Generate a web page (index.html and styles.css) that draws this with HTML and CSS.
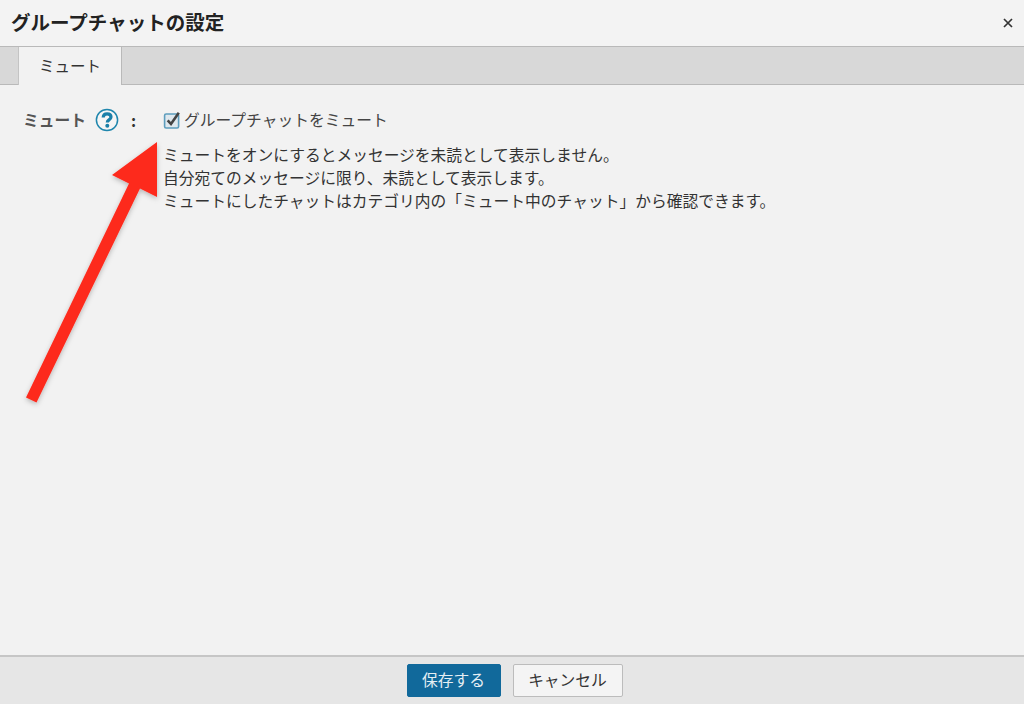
FILE: index.html
```html
<!DOCTYPE html>
<html lang="ja">
<head>
<meta charset="utf-8">
<title>グループチャットの設定</title>
<link rel="stylesheet" href="styles.css">
</head>
<body>
<div class="dialog">
  <header class="head">
    <h1 class="title">グループチャットの設定</h1>
    <svg class="close" width="10" height="10" viewBox="0 0 10 10"><path d="M1 1L9 9M9 1L1 9" stroke="#333" stroke-width="1.7" fill="none"/></svg>
  </header>
  <nav class="tabs"><div class="tab">ミュート</div></nav>
  <main class="body">
    <div class="label-col">
      <span class="label">ミュート</span>
      <svg class="help" width="24" height="24" viewBox="0 0 24 24"><circle cx="12" cy="12" r="10.6" fill="#fff" fill-opacity=".25" stroke="#1f86ad" stroke-width="1.5"/><path d="M8.200 9.500C8.300 7 10 5.800 12.100 5.800C14.400 5.800 16 7.100 16 9C16 10.400 15.200 11.100 14 11.900C12.800 12.700 12.300 13.200 12.300 14.600" fill="none" stroke="#1a7fa8" stroke-width="3.200"/><circle cx="12.300" cy="17.800" r="2" fill="#1a7fa8"/></svg>
      <span class="colon">:</span>
    </div>
    <div class="content">
      <div class="check-row">
        <svg class="check" width="18" height="18" viewBox="0 0 18 18"><rect x="1.600" y="3" width="14" height="14" rx="1.500" fill="#dfe8ee" stroke="#5d9dbd" stroke-width="1.600"/><path d="M4.700 9.300L8 13L15.800 1.800" fill="none" stroke="#444" stroke-width="2.600"/></svg>
        <span>グループチャットをミュート</span>
      </div>
      <p class="desc">ミュートをオンにするとメッセージを未読として表示しません。<br>自分宛てのメッセージに限り、未読として表示します。<br>ミュートにしたチャットはカテゴリ内の「ミュート中のチャット」から確認できます。</p>
    </div>
  </main>
  <footer class="foot">
    <button class="btn primary">保存する</button>
    <button class="btn">キャンセル</button>
  </footer>
  <svg class="arrow" width="180" height="420" viewBox="0 0 180 420">
    <defs><filter id="sh" x="-20%" y="-20%" width="140%" height="140%"><feDropShadow dx="0" dy="2" stdDeviation="2.500" flood-color="#000" flood-opacity=".25"/></filter></defs>
    <path d="M157 142L112 175L129 183.500L26 397.500L36.500 402.500L140 188.500L157 197Z" fill="#fd2a1c" filter="url(#sh)"/>
  </svg>
</div>
</body>
</html>
```
FILE: styles.css
```css
* { box-sizing: border-box; }
html, body { margin: 0; height: 100%; }
body { font-family: "Noto Sans CJK JP", "Liberation Sans", sans-serif; color: #333; background: #f2f2f2; }
.dialog { position: relative; width: 1024px; height: 704px; display: flex; flex-direction: column; overflow: hidden; }
.head { height: 47px; flex: none; display: flex; align-items: center; justify-content: space-between; padding: 0 11px 2px 11px; background: #f3f3f3; border-bottom: 1px solid #b9b9b9; }
.title { margin: 0; font-size: 19.500px; font-weight: 700; color: #222; line-height: 24px; }
.close { display: block; margin-top: 2px; }
.tabs { height: 38px; flex: none; display: flex; padding-left: 18px; background: #d8d8d8; border-bottom: 1px solid #b9b9b9; }
.tab { width: 104px; height: 38px; background: #f2f2f2; border-left: 1px solid #c4c4c4; border-right: 1px solid #b9b9b9; font-size: 15.500px; line-height: 36px; text-align: center; color: #333; }
.body { flex: 1; display: flex; padding-top: 24px; padding-left: 23px; }
.label-col { width: 140px; flex: none; height: 24px; display: flex; align-items: center; font-size: 15.750px; color: #555; }
.label { font-weight: 700; width: 72px; line-height: 20px; margin-top: -2px; }
.help { display: block; margin-top: -2px; }
.colon { margin-left: 12px; font-weight: 700; color: #333; margin-top: -2px; }
.content { font-size: 15.750px; }
.check-row { display: flex; align-items: center; height: 24px; line-height: 20px; color: #444; }
.check-row span { margin-top: -2px; }
.check { display: block; margin-right: 3px; margin-top: -2px; }
.desc { margin: 10px 0 0; line-height: 23px; color: #333; }
.foot { height: 49px; flex: none; display: flex; justify-content: center; gap: 12px; padding: 7px 0 0 5px; background: #e6e6e6; border-top: 2px solid #c6c6c6; }
.btn { width: 110px; height: 33px; padding: 0 0 2px; border: 1px solid #bcbcbc; border-radius: 2px; background: #f4f4f4; font: 15.750px "Noto Sans CJK JP", "Liberation Sans", sans-serif; color: #333; }
.primary { width: 94px; background: #11699b; border-color: #11699b; color: #e6eef3; }
.arrow { position: absolute; left: 0; top: 0; overflow: visible; pointer-events: none; }
```
